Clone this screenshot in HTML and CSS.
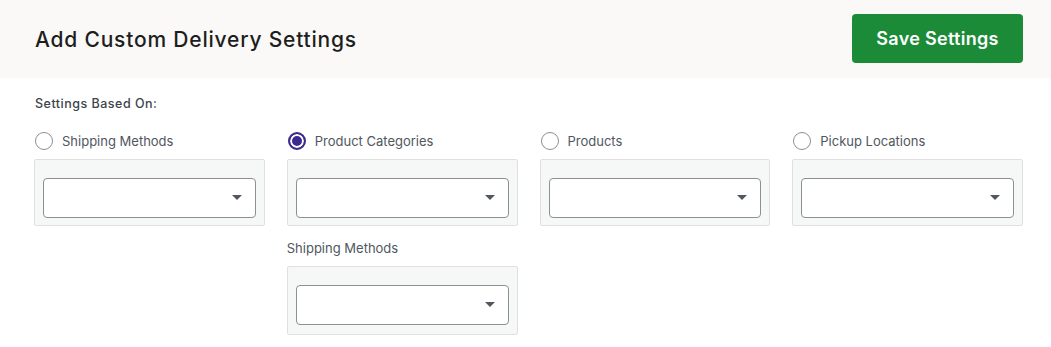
FILE: index.html
```html
<!DOCTYPE html>
<html lang="en">
<head>
  <meta charset="UTF-8" />
  <title>Add Custom Delivery Settings</title>
  <link rel="stylesheet" href="styles.css">
</head>
<body>
  <!-- 상단 헤더 -->
  <div class="header">
    <h1>Add Custom Delivery Settings</h1>
    <button class="save-btn">Save Settings</button>
  </div>

  <div class="content">
    <div class="based-on">Settings Based On:</div>

    <div class="columns">
      <div class="col">
        <label class="radio-row">
          <span class="radio"></span>
          <span>Shipping Methods</span>
        </label>
        <div class="select-box">
          <div class="select"><span class="caret"></span></div>
        </div>
      </div>

      <div class="col">
        <label class="radio-row">
          <span class="radio checked"></span>
          <span>Product Categories</span>
        </label>
        <div class="select-box">
          <div class="select"><span class="caret"></span></div>
        </div>
        <div class="sub-label">Shipping Methods</div>
        <div class="select-box">
          <div class="select"><span class="caret"></span></div>
        </div>
      </div>

      <div class="col">
        <label class="radio-row">
          <span class="radio"></span>
          <span>Products</span>
        </label>
        <div class="select-box">
          <div class="select"><span class="caret"></span></div>
        </div>
      </div>

      <div class="col">
        <label class="radio-row">
          <span class="radio"></span>
          <span>Pickup Locations</span>
        </label>
        <div class="select-box">
          <div class="select"><span class="caret"></span></div>
        </div>
      </div>
    </div>
  </div>
</body>
</html>
```

FILE: styles.css
```css
body {
  margin: 0;
  font-family: Inter, "Liberation Sans", sans-serif;
  background-color: #ffffff;
  color: #1e1e1e;
}

/* 헤더 */
.header {
  display: flex;
  align-items: center;
  justify-content: space-between;
  height: 78px;
  padding: 0 28px 0 35px;
  background-color: #faf9f7;
}

.header h1 {
  margin: 0;
  font-size: 21px;
  font-weight: 500;
  letter-spacing: 0.8px;
  color: #1e1e1e;
}

.save-btn {
  width: 171px;
  height: 49px;
  margin-top: -1px;
  background-color: #1c8b38;
  color: #fff;
  border: none;
  border-radius: 4px;
  font-family: Inter, "Liberation Sans", sans-serif;
  font-size: 18px;
  font-weight: 600;
  letter-spacing: 0.3px;
  cursor: pointer;
}

/* 본문 */
.content {
  padding: 18px 28px 0 34px;
}

.based-on {
  font-size: 12.5px;
  font-weight: 500;
  letter-spacing: 0.5px;
  color: #3c434a;
  margin-left: 1px;
}

.columns {
  display: grid;
  grid-template-columns: repeat(4, 1fr);
  column-gap: 22px;
  margin-top: 21px;
}

.radio-row {
  display: flex;
  align-items: center;
  gap: 9px;
  height: 18px;
  margin-left: 1px;
  font-size: 13px;
  color: #50575e;
}

.radio {
  width: 18px;
  height: 18px;
  border: 1px solid #8c8f94;
  border-radius: 50%;
  box-sizing: border-box;
  background: #fff;
}

.radio.checked {
  border: 2px solid #3c2a8f;
  box-shadow: inset 0 0 0 2px #fff;
  background: #3c2a8f;
}

.select-box {
  margin-top: 9px;
  padding: 18px 8px 7px;
  background-color: #f6f7f7;
  border: 1px solid #e0e0e0;
  border-radius: 2px;
}

.sub-label + .select-box {
  padding-bottom: 9px;
}

.select {
  position: relative;
  height: 38px;
  background: #fff;
  border: 1px solid #8c8f94;
  border-radius: 4px;
}

.caret {
  position: absolute;
  right: 13px;
  top: 16px;
  width: 0;
  height: 0;
  border-left: 5px solid transparent;
  border-right: 5px solid transparent;
  border-top: 5px solid #50575e;
}

.sub-label {
  margin-top: 13px;
  font-size: 13px;
  color: #50575e;
  height: 18px;
  line-height: 18px;
}
```
